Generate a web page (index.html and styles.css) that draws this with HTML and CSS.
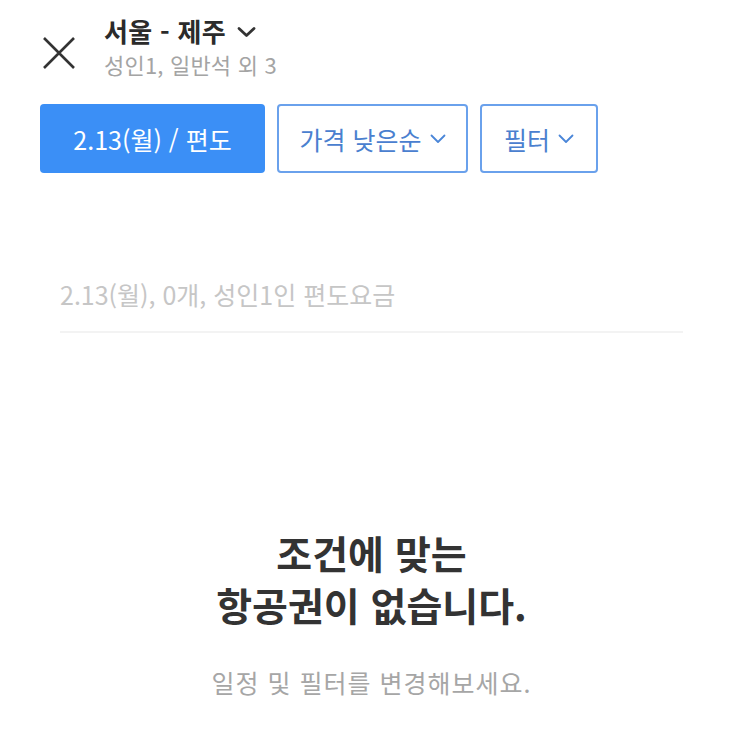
FILE: index.html
```html
<!DOCTYPE html>
<html lang="ko">
<head>
<meta charset="utf-8">
<link rel="stylesheet" href="styles.css">
</head>
<body>
<div class="page">
  <header class="header">
    <button class="close" aria-label="닫기">
      <svg width="34" height="34" viewBox="0 0 34 34"><path d="M2 2 L32 32 M32 2 L2 32" stroke="#333" stroke-width="2.6" fill="none"/></svg>
    </button>
    <div class="route">
      <div class="route-title">서울 - 제주
        <svg class="title-chev" width="19" height="12" viewBox="0 0 19 12"><path d="M2 2.5 L9.5 9.5 L17 2.5" stroke="#333" stroke-width="2.8" fill="none" stroke-linecap="round" stroke-linejoin="round"/></svg>
      </div>
      <div class="route-sub">성인1, 일반석 외 3</div>
    </div>
  </header>

  <div class="filters">
    <button class="chip chip-primary">2.13(월) / 편도</button>
    <button class="chip chip-outline chip-sort">가격 낮은순
      <svg width="16" height="10" viewBox="0 0 16 10"><path d="M1.5 1.5 L8 8 L14.5 1.5" stroke="#4a86d8" stroke-width="1.8" fill="none" stroke-linecap="round" stroke-linejoin="round"/></svg>
    </button>
    <button class="chip chip-outline chip-filter">필터
      <svg width="16" height="10" viewBox="0 0 16 10"><path d="M1.5 1.5 L8 8 L14.5 1.5" stroke="#4a86d8" stroke-width="1.8" fill="none" stroke-linecap="round" stroke-linejoin="round"/></svg>
    </button>
  </div>

  <div class="summary">2.13(월), 0개, 성인1인 편도요금</div>

  <section class="empty">
    <h2 class="empty-title">조건에 맞는<br>항공권이 없습니다.</h2>
    <p class="empty-sub">일정 및 필터를 변경해보세요.</p>
  </section>
</div>
</body>
</html>
```

FILE: styles.css
```css
* { box-sizing: border-box; }
html, body { margin: 0; padding: 0; background: #fff; }
body {
  font-family: "Noto Sans CJK KR", "Noto Sans", sans-serif;
  width: 743px;
  height: 743px;
  overflow: hidden;
}
.page { padding: 0 0 0 40px; }

.header {
  display: flex;
  align-items: flex-start;
  height: 104px;
  padding-top: 15px;
}
.close {
  border: 0;
  background: none;
  padding: 0;
  margin: 21px 0 0 2px;
  width: 34px;
  height: 34px;
  display: block;
}
.close svg { display: block; }
.route { margin-left: 28px; }
.route-title {
  font-size: 26px;
  font-weight: 700;
  color: #2b2b2b;
  line-height: 32px;
  display: flex;
  align-items: center;
  letter-spacing: 0.3px;
}
.title-chev { margin-left: 11px; margin-top: 2px; }
.route-sub {
  font-size: 22px;
  color: #a4a4a4;
  line-height: 30px;
  margin-top: 2px;
  letter-spacing: 0.2px;
}

.filters {
  display: flex;
  gap: 12px;
}
.chip {
  height: 69px;
  border-radius: 4px;
  font-family: inherit;
  font-size: 25px;
  display: flex;
  align-items: center;
  justify-content: center;
  gap: 8px;
  padding: 0;
  letter-spacing: 0;
}
.chip-primary {
  width: 225px;
  background: #3b8ff6;
  border: 0;
  color: #fff;
}
.chip-outline {
  background: #fff;
  border: 2px solid #6aa1ec;
  color: #4a80cf;
}
.chip-sort { width: 191px; }
.chip-filter { width: 118px; }

.summary {
  margin: 105px 60px 0 20px;
  padding-bottom: 21px;
  border-bottom: 2px solid #f3f3f3;
  font-size: 25px;
  color: #c6c6c6;
  line-height: 32px;
  letter-spacing: 0;
}

.empty {
  text-align: center;
  margin-left: -40px;
  padding-top: 193px;
}
.empty-title {
  margin: 0;
  font-size: 39px;
  font-weight: 700;
  color: #333;
  line-height: 52px;
  letter-spacing: 0;
}
.empty-sub {
  margin: 36px 0 0;
  font-size: 25px;
  color: #a6a6a6;
  line-height: 32px;
  letter-spacing: 1px;
}
```
